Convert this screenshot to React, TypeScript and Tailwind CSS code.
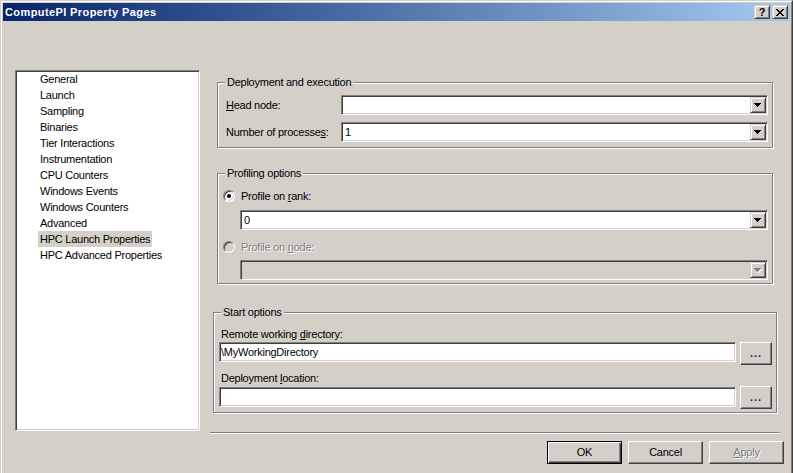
import React from "react";

const face = "bg-[#d4d0c8]";
const sunken =
  "border border-t-[#808080] border-l-[#808080] border-b-white border-r-white shadow-[inset_1px_1px_0_#404040,inset_-1px_-1px_0_#d4d0c8] p-[1px]";
const raised =
  "border border-t-white border-l-white border-r-[#404040] border-b-[#404040] shadow-[inset_-1px_-1px_0_#808080]";
const smallRaised =
  "border border-t-[#d4d0c8] border-l-[#d4d0c8] border-r-[#404040] border-b-[#404040] shadow-[inset_1px_1px_0_#fff,inset_-1px_-1px_0_#808080]";

const pages = [
  "General",
  "Launch",
  "Sampling",
  "Binaries",
  "Tier Interactions",
  "Instrumentation",
  "CPU Counters",
  "Windows Events",
  "Windows Counters",
  "Advanced",
  "HPC Launch Properties",
  "HPC Advanced Properties",
];

function Arrow({ disabled }: { disabled?: boolean }) {
  const d = "M0 0h7v1H0zM1 1h5v1H1zM2 2h3v1H2zM3 3h1v1H3z";
  return (
    <svg width="8" height="5" shapeRendering="crispEdges">
      {disabled && <path d={d} fill="#fff" transform="translate(1 1)" />}
      <path d={d} fill={disabled ? "#808080" : "#000"} />
    </svg>
  );
}

function Combo({ value, disabled, className }: { value?: string; disabled?: boolean; className: string }) {
  return (
    <div className={`flex h-[20px] ${sunken} ${disabled ? face : "bg-white"} ${className}`}>
      <div className="flex-1 pl-[2px] leading-[16px]">{value}</div>
      <div className={`w-[16px] h-[16px] ${face} ${smallRaised} flex items-center justify-center pt-[1px]`}>
        <Arrow disabled={disabled} />
      </div>
    </div>
  );
}

function Group({ title, className, children }: { title: string; className: string; children: React.ReactNode }) {
  return (
    <div className={`relative border border-[#808080] shadow-[1px_1px_0_#fff,inset_1px_1px_0_#fff] ${className}`}>
      <span className={`absolute left-[7px] top-[-7px] ${face} px-[2px] leading-[13px]`}>{title}</span>
      {children}
    </div>
  );
}

function Radio({ checked, disabled, children }: { checked?: boolean; disabled?: boolean; children: React.ReactNode }) {
  return (
    <div className="flex items-center h-[12px] pl-[5px] gap-[6px]">
      <div
        className={`w-[12px] h-[12px] rounded-full border border-t-[#808080] border-l-[#808080] border-b-white border-r-white shadow-[inset_1px_1px_0_#404040,inset_-1px_-1px_0_#d4d0c8] flex items-center justify-center ${
          disabled ? face : "bg-white"
        }`}
      >
        {checked && <div className="w-[4px] h-[4px] rounded-full bg-black" />}
      </div>
      <span className={disabled ? "text-[#808080] [text-shadow:1px_1px_0_#fff]" : ""}>{children}</span>
    </div>
  );
}

function Browse() {
  return (
    <div className={`w-[32px] h-[23px] ml-[4px] ${face} ${raised} flex items-center justify-center text-[#400080] font-bold tracking-[1px] leading-[13px] pb-[1px]`}>
      ...
    </div>
  );
}

function Button({ children, isDefault, disabled }: { children: React.ReactNode; isDefault?: boolean; disabled?: boolean }) {
  const cls = isDefault
    ? "border border-black shadow-[inset_1px_1px_0_#fff,inset_-1px_-1px_0_#404040,inset_-2px_-2px_0_#808080]"
    : raised;
  return (
    <div
      className={`w-[75px] h-[23px] ${face} ${cls} flex items-center justify-center ${
        disabled ? "text-[#808080] [text-shadow:1px_1px_0_#fff]" : ""
      }`}
    >
      {children}
    </div>
  );
}

export default function App() {
  return (
    <div
      className={`w-[793px] h-[473px] overflow-hidden ${face} border-t border-l border-r border-t-[#d4d0c8] border-l-[#d4d0c8] border-r-[#404040] font-['Liberation_Sans',Arial,sans-serif] text-[11px] leading-[13px] tracking-[-0.25px] text-black`}
    >
      <div className="h-full border-t border-l border-r border-t-white border-l-white border-r-[#808080] p-[1px] flex flex-col">
        {/* TITLE BAR */}
        <div className="h-[18px] flex items-center bg-gradient-to-r from-[#0a246a] to-[#a6caf0] pl-[2px] pr-[2px]">
          <span className="flex-1 text-white font-bold text-[11px] leading-[18px] tracking-[0.4px]">ComputePI Property Pages</span>
          <div className={`w-[16px] h-[14px] ${face} ${smallRaised} flex items-center justify-center font-bold text-[11px] leading-[12px]`}>
            ?
          </div>
          <div className={`w-[16px] h-[14px] ml-[2px] ${face} ${smallRaised} flex items-center justify-center`}>
            <svg width="8" height="7" shapeRendering="crispEdges">
              <path d="M0 0h2v1H0zM6 0h2v1H6zM1 1h2v1H1zM5 1h2v1H5zM2 2h4v1H2zM3 3h2v1H3zM2 4h4v1H2zM1 5h2v1H1zM5 5h2v1H5zM0 6h2v1H0zM6 6h2v1H6z" fill="#000" />
            </svg>
          </div>
        </div>

        {/* BODY */}
        <div className="flex pt-[49px]">
          <div className={`ml-[12px] w-[185px] h-[361px] bg-white ${sunken}`}>
            <div className="mt-[-1px]">
              {pages.map((p) => (
                <div key={p} className="h-[16px] flex items-center">
                  <span
                    className={`ml-[21px] px-[2px] leading-[16px] ${p === "HPC Launch Properties" ? "bg-[#d4d0c8]" : ""}`}
                  >
                    {p}
                  </span>
                </div>
              ))}
            </div>
          </div>

          <div className="ml-[10px] w-[574px] flex flex-col">
            {/* DEPLOYMENT AND EXECUTION */}
            <Group title="Deployment and execution" className="mt-[12px] ml-[7px] w-[556px] h-[66px]">
              <div className="pt-[12px] flex flex-col gap-[7px]">
                <div className="flex items-center">
                  <span className="pl-[8px] w-[123px]">
                    <u>H</u>ead node:
                  </span>
                  <Combo className="w-[427px]" />
                </div>
                <div className="flex items-center">
                  <span className="pl-[8px] w-[123px]">
                    Number of processe<u>s</u>:
                  </span>
                  <Combo className="w-[427px]" value="1" />
                </div>
              </div>
            </Group>

            {/* PROFILING OPTIONS */}
            <Group title="Profiling options" className="mt-[25px] ml-[7px] w-[556px] h-[111px]">
              <div className="pt-[16px] flex flex-col">
                <Radio checked>
                  Profile on <u>r</u>ank:
                </Radio>
                <Combo className="mt-[8px] ml-[22px] w-[528px]" value="0" />
                <div className="mt-[11px]">
                  <Radio disabled>
                    Profile on <u>n</u>ode:
                  </Radio>
                </div>
                <Combo className="mt-[7px] ml-[22px] w-[528px]" disabled />
              </div>
            </Group>

            {/* START OPTIONS */}
            <Group title="Start options" className="mt-[28px] ml-[3px] w-[564px] h-[101px]">
              <div className="pt-[15px] flex flex-col">
                <span className="pl-[7px]">
                  Remote working <u>d</u>irectory:
                </span>
                <div className="mt-[1px] flex items-start">
                  <div className={`ml-[5px] w-[517px] h-[20px] bg-white ${sunken} pl-[1px] leading-[16px]`}>
                    \MyWorkingDirectory
                  </div>
                  <Browse />
                </div>
                <span className="mt-[7px] pl-[7px]">
                  Deployment <u>l</u>ocation:
                </span>
                <div className="mt-[1px] flex items-start">
                  <div className={`ml-[5px] mt-[1px] w-[517px] h-[20px] bg-white ${sunken}`} />
                  <Browse />
                </div>
              </div>
            </Group>

            <div className="mt-[19px] w-[570px] h-[2px] border-t border-b border-t-[#808080] border-b-white" />

            <div className="mt-[7px] flex justify-end gap-[6px]">
              <Button isDefault>OK</Button>
              <Button>Cancel</Button>
              <Button disabled>
                <u>A</u>pply
              </Button>
            </div>
          </div>
        </div>
      </div>
    </div>
  );
}
